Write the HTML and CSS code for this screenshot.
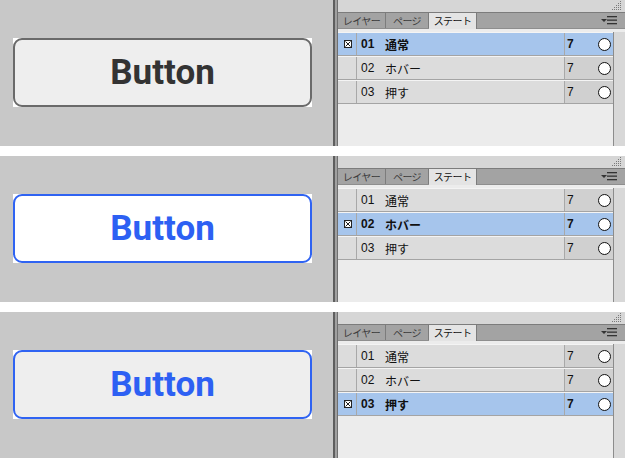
FILE: index.html
```html
<!DOCTYPE html>
<html lang="ja">
<head>
<meta charset="utf-8">
<title>Button states</title>
<link rel="stylesheet" href="styles.css">
</head>
<body>
<div class="stack">

  <section class="frame">
    <div class="canvas"><div class="btn-box"><div class="btn btn-normal">Button</div></div></div>
    <div class="panel"><div class="panel-body">
      <div class="grip-strip"><svg class="grip" width="11" height="9" viewBox="0 0 11 9"><g fill="#7a7a7a"><rect x="9" y="0" width="1" height="1"/><rect x="7" y="2" width="1" height="1"/><rect x="9" y="2" width="1" height="1"/><rect x="5" y="4" width="1" height="1"/><rect x="7" y="4" width="1" height="1"/><rect x="9" y="4" width="1" height="1"/><rect x="3" y="6" width="1" height="1"/><rect x="5" y="6" width="1" height="1"/><rect x="7" y="6" width="1" height="1"/><rect x="9" y="6" width="1" height="1"/><rect x="1" y="8" width="1" height="1"/><rect x="3" y="8" width="1" height="1"/><rect x="5" y="8" width="1" height="1"/><rect x="7" y="8" width="1" height="1"/><rect x="9" y="8" width="1" height="1"/></g></svg></div>
      <div class="tabbar">
        <div class="tab t1">レイヤー</div><div class="tab t2">ページ</div><div class="tab t3 active">ステート</div>
        <svg class="menu" width="16" height="9" viewBox="0 0 16 9"><path d="M0 3h6l-3 3z" fill="#333"/><g fill="#333"><rect x="6" y="0" width="10" height="1.3"/><rect x="6" y="3.5" width="10" height="1.3"/><rect x="6" y="7" width="10" height="1.3"/></g></svg>
      </div>
      <div class="content">
        <div class="list">
          <div class="row sel"><div class="c-chk"><svg width="8" height="8" viewBox="0 0 8 8"><rect x="0.5" y="0.5" width="7" height="7" fill="#fff" stroke="#222"/><path d="M1.5 1.5l5 5M6.5 1.5l-5 5" stroke="#222" stroke-width="1"/></svg></div><div class="c-name"><span class="no">01</span><span>通常</span></div><div class="c-num"><span>7</span><span class="dot"></span></div></div>
          <div class="row"><div class="c-chk"></div><div class="c-name"><span class="no">02</span><span>ホバー</span></div><div class="c-num"><span>7</span><span class="dot"></span></div></div>
          <div class="row"><div class="c-chk"></div><div class="c-name"><span class="no">03</span><span>押す</span></div><div class="c-num"><span>7</span><span class="dot"></span></div></div>
        </div>
        <div class="scroll"></div>
      </div>
    </div></div>
  </section>

  <section class="frame">
    <div class="canvas"><div class="btn-box"><div class="btn btn-hover">Button</div></div></div>
    <div class="panel"><div class="panel-body">
      <div class="grip-strip"><svg class="grip" width="11" height="9" viewBox="0 0 11 9"><g fill="#7a7a7a"><rect x="9" y="0" width="1" height="1"/><rect x="7" y="2" width="1" height="1"/><rect x="9" y="2" width="1" height="1"/><rect x="5" y="4" width="1" height="1"/><rect x="7" y="4" width="1" height="1"/><rect x="9" y="4" width="1" height="1"/><rect x="3" y="6" width="1" height="1"/><rect x="5" y="6" width="1" height="1"/><rect x="7" y="6" width="1" height="1"/><rect x="9" y="6" width="1" height="1"/><rect x="1" y="8" width="1" height="1"/><rect x="3" y="8" width="1" height="1"/><rect x="5" y="8" width="1" height="1"/><rect x="7" y="8" width="1" height="1"/><rect x="9" y="8" width="1" height="1"/></g></svg></div>
      <div class="tabbar">
        <div class="tab t1">レイヤー</div><div class="tab t2">ページ</div><div class="tab t3 active">ステート</div>
        <svg class="menu" width="16" height="9" viewBox="0 0 16 9"><path d="M0 3h6l-3 3z" fill="#333"/><g fill="#333"><rect x="6" y="0" width="10" height="1.3"/><rect x="6" y="3.5" width="10" height="1.3"/><rect x="6" y="7" width="10" height="1.3"/></g></svg>
      </div>
      <div class="content">
        <div class="list">
          <div class="row"><div class="c-chk"></div><div class="c-name"><span class="no">01</span><span>通常</span></div><div class="c-num"><span>7</span><span class="dot"></span></div></div>
          <div class="row sel"><div class="c-chk"><svg width="8" height="8" viewBox="0 0 8 8"><rect x="0.5" y="0.5" width="7" height="7" fill="#fff" stroke="#222"/><path d="M1.5 1.5l5 5M6.5 1.5l-5 5" stroke="#222" stroke-width="1"/></svg></div><div class="c-name"><span class="no">02</span><span>ホバー</span></div><div class="c-num"><span>7</span><span class="dot"></span></div></div>
          <div class="row"><div class="c-chk"></div><div class="c-name"><span class="no">03</span><span>押す</span></div><div class="c-num"><span>7</span><span class="dot"></span></div></div>
        </div>
        <div class="scroll"></div>
      </div>
    </div></div>
  </section>

  <section class="frame">
    <div class="canvas"><div class="btn-box"><div class="btn btn-press">Button</div></div></div>
    <div class="panel"><div class="panel-body">
      <div class="grip-strip"><svg class="grip" width="11" height="9" viewBox="0 0 11 9"><g fill="#7a7a7a"><rect x="9" y="0" width="1" height="1"/><rect x="7" y="2" width="1" height="1"/><rect x="9" y="2" width="1" height="1"/><rect x="5" y="4" width="1" height="1"/><rect x="7" y="4" width="1" height="1"/><rect x="9" y="4" width="1" height="1"/><rect x="3" y="6" width="1" height="1"/><rect x="5" y="6" width="1" height="1"/><rect x="7" y="6" width="1" height="1"/><rect x="9" y="6" width="1" height="1"/><rect x="1" y="8" width="1" height="1"/><rect x="3" y="8" width="1" height="1"/><rect x="5" y="8" width="1" height="1"/><rect x="7" y="8" width="1" height="1"/><rect x="9" y="8" width="1" height="1"/></g></svg></div>
      <div class="tabbar">
        <div class="tab t1">レイヤー</div><div class="tab t2">ページ</div><div class="tab t3 active">ステート</div>
        <svg class="menu" width="16" height="9" viewBox="0 0 16 9"><path d="M0 3h6l-3 3z" fill="#333"/><g fill="#333"><rect x="6" y="0" width="10" height="1.3"/><rect x="6" y="3.5" width="10" height="1.3"/><rect x="6" y="7" width="10" height="1.3"/></g></svg>
      </div>
      <div class="content">
        <div class="list">
          <div class="row"><div class="c-chk"></div><div class="c-name"><span class="no">01</span><span>通常</span></div><div class="c-num"><span>7</span><span class="dot"></span></div></div>
          <div class="row"><div class="c-chk"></div><div class="c-name"><span class="no">02</span><span>ホバー</span></div><div class="c-num"><span>7</span><span class="dot"></span></div></div>
          <div class="row sel"><div class="c-chk"><svg width="8" height="8" viewBox="0 0 8 8"><rect x="0.5" y="0.5" width="7" height="7" fill="#fff" stroke="#222"/><path d="M1.5 1.5l5 5M6.5 1.5l-5 5" stroke="#222" stroke-width="1"/></svg></div><div class="c-name"><span class="no">03</span><span>押す</span></div><div class="c-num"><span>7</span><span class="dot"></span></div></div>
        </div>
        <div class="scroll"></div>
      </div>
    </div></div>
  </section>

</div>
</body>
</html>
```
FILE: styles.css
```css
* { box-sizing: border-box; }
html, body { margin: 0; padding: 0; background: #fff; }
body { font-family: "Liberation Sans", "Noto Sans CJK JP", sans-serif; }

.stack { display: flex; flex-direction: column; gap: 10px; width: 625px; }

.frame { display: flex; height: 146px; }

.canvas {
  width: 333px;
  background: #c8c8c8;
  padding: 38px 0 0 13px;
}
.btn-box { width: 299px; height: 69px; background: #fff; }
.btn {
  width: 100%; height: 100%;
  border-radius: 9px;
  border: 2px solid #6a6a6a;
  background: #eeeeee;
  display: flex; align-items: center; justify-content: center;
  font-family: Roboto, "Liberation Sans", sans-serif;
  font-weight: 700;
  font-size: 35px;
  color: #333;
}
.btn-hover { border-color: #2f63f2; background: #fff; color: #2d60f3; }
.btn-press { border-color: #2f63f2; background: #eeeeee; color: #2d60f3; }

.panel {
  width: 292px;
  border-left: 2px solid #5e5e5e;
  padding-left: 2px;
  background: #a0a0a0;
  display: flex;
}
.panel-body {
  flex: 1;
  border-left: 1px solid #707070;
  background: #ececec;
  display: flex; flex-direction: column;
}

.grip-strip {
  height: 13px;
  background: #d6d6d6;
  border-bottom: 1px solid #7c7c7c;
  display: flex; justify-content: flex-end; align-items: flex-start;
  padding: 1px 3px 0 0;
}

.tabbar {
  height: 16px;
  background: #a3a3a3;
  display: flex; align-items: flex-end;
  border-bottom: 1px solid #8e8e8e;
}
.tab {
  height: 15px;
  display: flex; align-items: center; justify-content: center;
  font-family: "Noto Sans CJK JP", sans-serif;
  font-size: 10px;
  letter-spacing: -0.6px;
  color: #3a3a3a;
  border-right: 1px solid #7c7c7c;
  line-height: 1;
}
.t1 { width: 48px; }
.t2 { width: 43px; }
.t3 { width: 48px; }
.tab.active { background: #e4e4e4; color: #111; height: 16px; margin-bottom: -1px; }
.menu { margin-left: auto; margin-right: 8px; align-self: center; }

.content { flex: 1; display: flex; padding-top: 3px; }
.list { width: 275px; }
.scroll { flex: 1; border-left: 1px solid #8c8c8c; background: #d8d8d8; }

.row {
  height: 24px;
  display: flex;
  border-top: 1px solid #f4f4f4;
  border-bottom: 1px solid #a4a4a4;
  background: #dcdcdc;
  font-size: 12px;
  color: #111;
}
.c-chk {
  width: 19px;
  border-right: 1px solid #a8a8a8;
  display: flex; align-items: center; justify-content: center;
  padding-left: 2px;
}
.c-name {
  flex: 1;
  display: flex; align-items: center;
  padding-left: 4px;
}
.c-name .no { width: 24px; }
.c-num {
  width: 49px;
  border-left: 1px solid #a8a8a8;
  background: #d0d0d0;
  display: flex; align-items: center; justify-content: space-between;
  padding: 0 2px 0 2px;
}
.dot {
  width: 13px; height: 13px;
  border-radius: 50%;
  background: #fff;
  border: 1.3px solid #111;
}
.row.sel { background: #a6c5ec; font-weight: 700; }
.row.sel .c-num { background: #a6c5ec; }
```
